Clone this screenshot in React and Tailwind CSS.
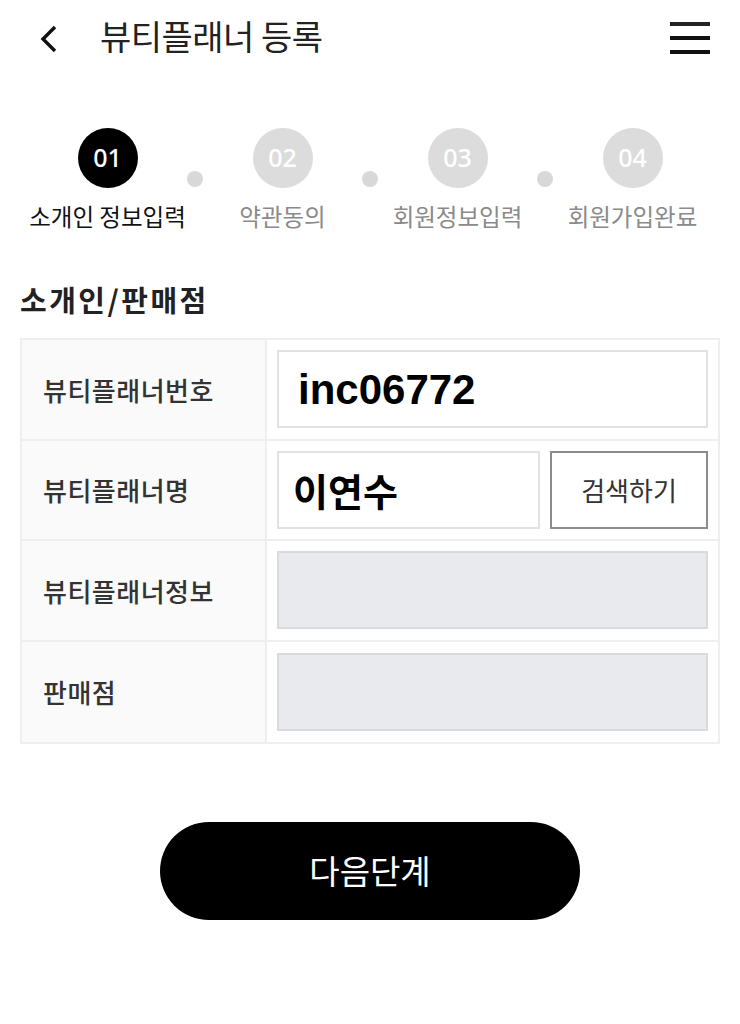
import React from "react";

const KR = { fontFamily: '"Noto Sans CJK KR", "Noto Sans", sans-serif' };

function Step({ num, label, active }) {
  return (
    <div className="flex flex-col items-center w-[175px]">
      <div
        className={`w-[60px] h-[60px] rounded-full flex items-center justify-center text-[25px] font-medium ${active ? "bg-black text-white" : "bg-[#dcdcdc] text-white"}`}
        style={{ fontFamily: '"Noto Sans", sans-serif' }}
      >
        {num}
      </div>
      <div className={`mt-[11px] text-[23.5px] leading-[34px] whitespace-nowrap ${active ? "text-[#111]" : "text-[#8a8a8a]"}`}>
        {label}
      </div>
    </div>
  );
}

function Row({ label, children, last }) {
  return (
    <div className={`flex h-[100.5px] ${last ? "" : "border-b-2 border-[#eeeeee]"}`}>
      <div className="w-[245px] shrink-0 bg-[#fafafa] border-r-2 border-[#eeeeee] flex items-center pl-[21px] text-[26px] tracking-[0.5px] font-medium text-[#333]">
        {label}
      </div>
      <div className="flex-1 flex items-center px-[10px] gap-[10px]">{children}</div>
    </div>
  );
}

export default function App() {
  return (
    <div className="w-[740px] h-[1024px] bg-white relative" style={KR}>
      {/* Header */}
      <div className="flex items-center h-[76px] pl-[36px] pr-[30px]">
        <svg width="24" height="32" viewBox="0 0 24 32" className="mt-[2px]">
          <path d="M19 4 L7 16 L19 28" fill="none" stroke="#111" strokeWidth="3.4" strokeLinecap="butt" strokeLinejoin="miter" />
        </svg>
        <div className="ml-[40px] -mt-[5px] text-[34px] leading-[40px] text-[#222] font-normal tracking-[-0.5px]">뷰티플래너 등록</div>
        <div className="ml-auto flex flex-col gap-[10px] w-[40px]">
          <div className="h-[4px] bg-[#222]" />
          <div className="h-[4px] bg-[#111]" />
          <div className="h-[4px] bg-[#111]" />
        </div>
      </div>

      {/* Steps */}
      <div className="relative mx-[20px] mt-[52px] flex">
        <Step num="01" label="소개인 정보입력" active />
        <Step num="02" label="약관동의" />
        <Step num="03" label="회원정보입력" />
        <Step num="04" label="회원가입완료" />
        <div className="absolute left-[167px] top-[43px] w-[16px] h-[16px] rounded-full bg-[#d8d8d8]" />
        <div className="absolute left-[342px] top-[43px] w-[16px] h-[16px] rounded-full bg-[#d8d8d8]" />
        <div className="absolute left-[517px] top-[43px] w-[16px] h-[16px] rounded-full bg-[#d8d8d8]" />
      </div>

      {/* Section title */}
      <div className="mx-[20px] mt-[46px] text-[29px] leading-[40px] font-bold tracking-[2.5px] text-[#222]">소개인/판매점</div>

      {/* Table */}
      <div className="mx-[20px] mt-[19px] border-2 border-[#eeeeee]">
        <Row label="뷰티플래너번호">
          <div
            className="flex-1 h-[78px] border-2 border-[#e2e2e2] flex items-center pl-[19px] text-[42px] font-bold text-black"
            style={{ fontFamily: '"Liberation Sans", Arial, sans-serif' }}
          >
            inc06772
          </div>
        </Row>
        <Row label="뷰티플래너명">
          <div className="flex-1 h-[78px] border-2 border-[#e2e2e2] flex items-center pl-[14px] text-[38px] font-bold text-black">
            이연수
          </div>
          <div className="w-[158px] h-[78px] border-2 border-[#8c8c8c] flex items-center justify-center text-[26px] text-[#333]">
            검색하기
          </div>
        </Row>
        <Row label="뷰티플래너정보">
          <div className="flex-1 h-[78px] border-2 border-[#d9dadc] bg-[#e8eaed]" />
        </Row>
        <Row label="판매점" last>
          <div className="flex-1 h-[78px] border-2 border-[#d9dadc] bg-[#e8eaed]" />
        </Row>
      </div>

      {/* Next button */}
      <div className="flex justify-center mt-[78px]">
        <div className="w-[420px] h-[98px] rounded-full bg-black flex items-center justify-center text-white text-[33px]">
          다음단계
        </div>
      </div>
    </div>
  );
}
